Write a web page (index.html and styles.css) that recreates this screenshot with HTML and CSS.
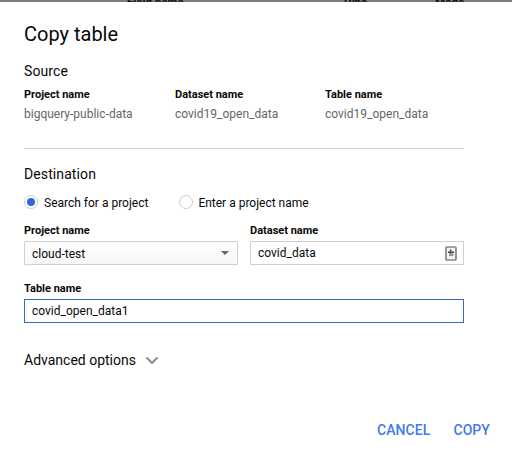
FILE: index.html
```html
<!DOCTYPE html>
<html lang="en">
<head>
<meta charset="utf-8">
<title>Copy table</title>
<link rel="stylesheet" href="styles.css">
</head>
<body>
<div class="backdrop"><span class="col-field">Field name</span><span class="col-type">Type</span><span class="col-mode">Mode</span></div>
<main class="dialog">
  <h1 class="title"><span>Copy table</span></h1>
  <section class="source">
    <h2 class="heading"><span>Source</span></h2>
    <div class="source-grid">
      <div><div class="label"><span>Project name</span></div><div class="value"><span>bigquery-public-data</span></div></div>
      <div><div class="label"><span>Dataset name</span></div><div class="value"><span>covid19_open_data</span></div></div>
      <div><div class="label"><span>Table name</span></div><div class="value"><span>covid19_open_data</span></div></div>
    </div>
  </section>
  <section class="destination">
    <h2 class="heading"><span>Destination</span></h2>
    <div class="radios">
      <div class="radio"><span class="dot checked"></span><span class="radio-text">Search for a project</span></div>
      <div class="radio"><span class="dot"></span><span class="radio-text">Enter a project name</span></div>
    </div>
    <div class="fields">
      <div class="field">
        <div class="label"><span>Project name</span></div>
        <div class="box select"><span class="select-text">cloud-test</span><span class="caret"></span></div>
      </div>
      <div class="field">
        <div class="label"><span>Dataset name</span></div>
        <div class="box"><span>covid_data</span>
          <svg class="key" width="12" height="15" viewBox="0 0 12 15"><rect x="1" y="1" width="10" height="13" rx=".7" fill="#f4f4f4" stroke="#858585" stroke-width="1.700"/><path d="M5.600 3.600v5M3 6.300h6" stroke="#444" stroke-width="1.400"/><path d="M4 7.500h4.500v2.500H4z" fill="#999"/></svg>
        </div>
      </div>
    </div>
    <div class="field table-field">
      <div class="label"><span>Table name</span></div>
      <div class="box focused"><span>covid_open_data1</span></div>
    </div>
  </section>
  <div class="advanced"><span>Advanced options</span>
    <svg width="14" height="9" viewBox="0 0 14 9"><path d="M1.500 1.500L7 7l5.500-5.500" fill="none" stroke="#858585" stroke-width="1.800"/></svg>
  </div>
  <footer class="actions"><span>CANCEL</span><span>COPY</span></footer>
</main>
</body>
</html>
```

FILE: styles.css
```css
* { box-sizing: border-box; }
body {
  margin: 0;
  width: 512px;
  height: 455px;
  overflow: hidden;
  background: #fff;
  color: #080808;
  font: 12px/16px Roboto, sans-serif;
}
.backdrop {
  height: 2px;
  overflow: hidden;
  display: grid;
  grid-template-columns: 127px 215px 93px 1fr;
  background: #7d7b7b;
  color: #111;
  font-size: 11.5px;
  font-weight: 700;
  line-height: 12px;
}
.backdrop span { margin-top: -4px; }
.col-field { grid-column: 2; }
.dialog { padding: 19px 22px 0 24px; }
.title { margin: 0; font-size: 20px; font-weight: 400; line-height: 26px; }
.heading { margin: 0; font-size: 14px; font-weight: 400; line-height: 20px; letter-spacing: .1px; }
.source { margin-top: 14px; width: 440px; height: 88px; border-bottom: 1px solid #d0d0d0; }
.source-grid { display: grid; grid-template-columns: 151px 150px 1fr; margin-top: 7px; }
.label { font-size: 11px; font-weight: 700; line-height: 14px; }
.value { margin-top: 4px; color: #666; }
.destination { width: 440px; margin-top: 15px; }
.radios { display: flex; gap: 31px; margin-top: 9px; }
.radio { display: flex; align-items: center; gap: 6px; height: 18px; }
.radio + .radio { gap: 5px; }
.radio-text, .select-text { padding-top: 2px; }
.dot {
  width: 14px; height: 14px;
  border: 1px solid #ccc; border-radius: 50%;
  display: flex; align-items: center; justify-content: center;
}
.checked::before { content: ""; width: 8px; height: 8px; border-radius: 50%; background: #3367d6; }
.fields { display: grid; grid-template-columns: 214px 214px; gap: 12px; margin-top: 13px; }
.box {
  display: flex; align-items: center; justify-content: space-between;
  height: 24px; margin-top: 3px; padding: 0 7px; border: 1px solid #d0d0d0;
}
.select { border-radius: 1px; background: linear-gradient(#fff, #f7f7f7); }
.caret { border: 4px solid transparent; border-top-color: #666; border-bottom: 0; margin-right: 1px; }
.key { margin-right: -1px; }
.table-field { margin-top: 17px; }
.focused { border-color: #3367d6; }
.advanced { display: flex; align-items: center; gap: 9px; margin-top: 27px; font-size: 14px; line-height: 20px; }
.actions {
  display: flex; justify-content: flex-end; gap: 23px; margin-top: 50px;
  color: #3f7ae8; font-size: 14px; font-weight: 500; line-height: 20px; letter-spacing: .08px;
}
```
